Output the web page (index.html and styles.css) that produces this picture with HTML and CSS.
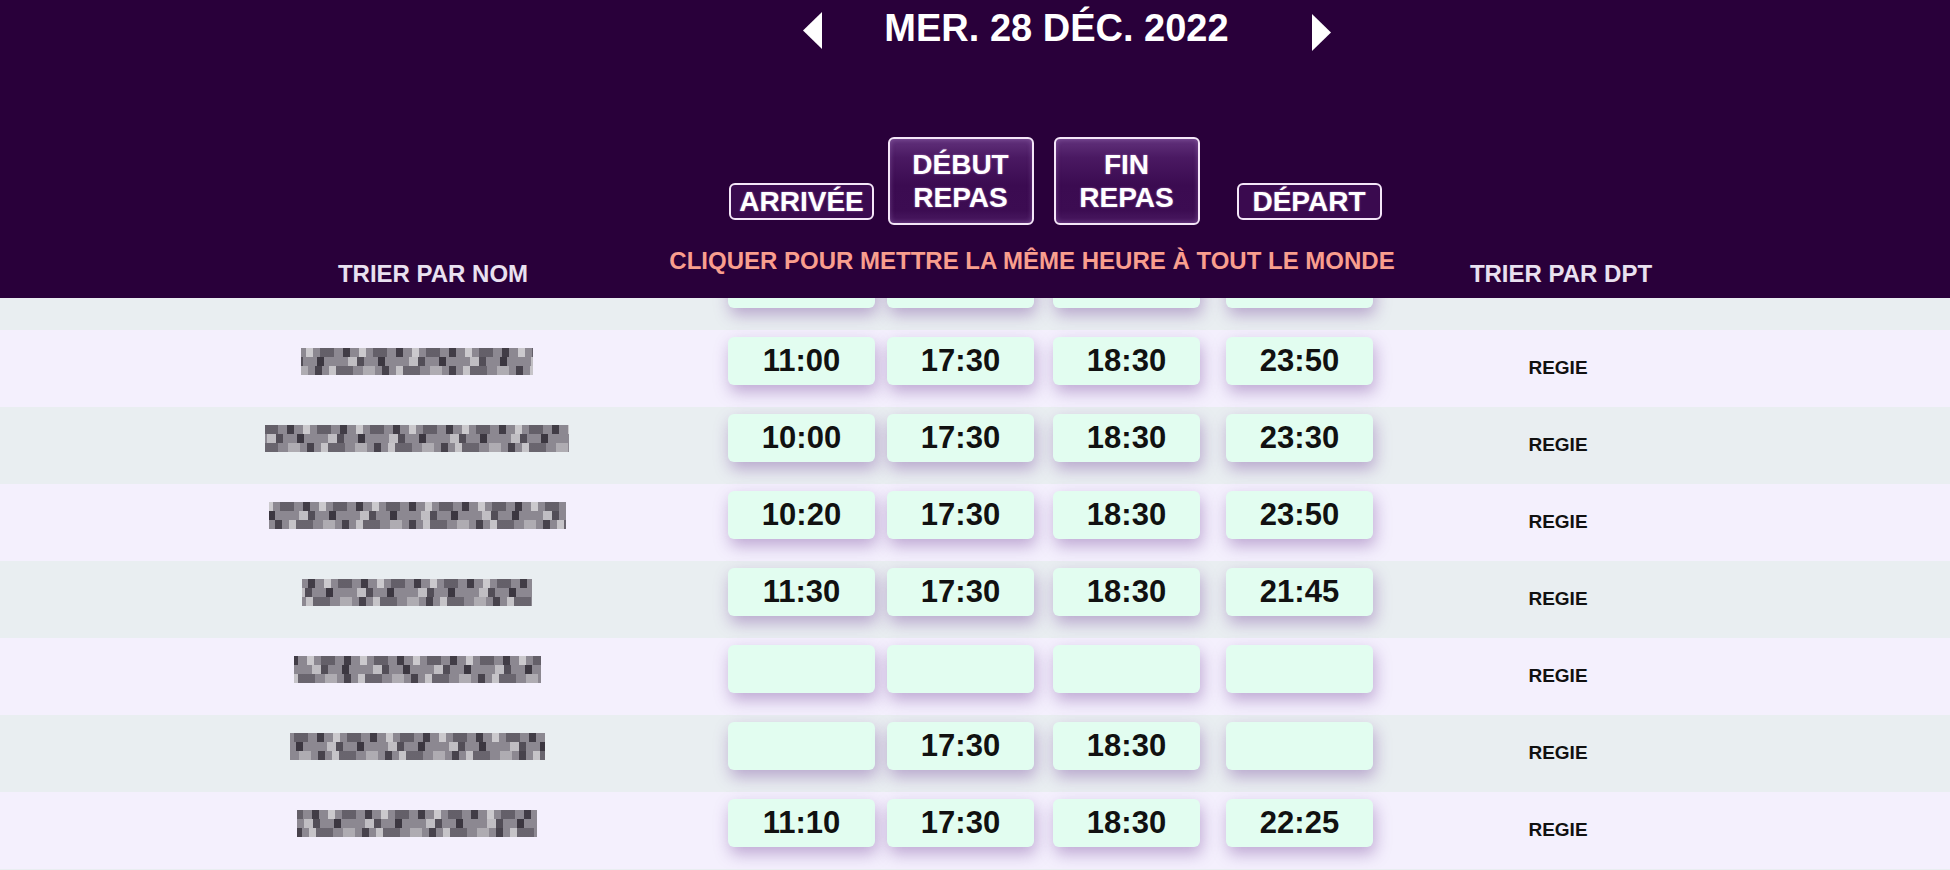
FILE: index.html
```html
<!DOCTYPE html>
<html lang="fr">
<head>
<meta charset="utf-8">
<title>Planning</title>
<link rel="stylesheet" href="styles.css">
</head>
<body>
<header class="top">
  <div class="nav">
    <svg class="arrow arrow-left" width="19" height="37" viewBox="0 0 19 37"><polygon points="19,0 19,37 0,18.5" fill="#fff"/></svg>
    <h1 class="date">MER. 28 DÉC. 2022</h1>
    <svg class="arrow arrow-right" width="19" height="37" viewBox="0 0 19 37"><polygon points="0,0 19,18.5 0,37" fill="#fff"/></svg>
  </div>
  <button class="btn btn-small b1">ARRIVÉE</button>
  <button class="btn btn-big b2">DÉBUT<br>REPAS</button>
  <button class="btn btn-big b3">FIN<br>REPAS</button>
  <button class="btn btn-small b4">DÉPART</button>
  <span class="sort sort-name">TRIER PAR NOM</span>
  <span class="hint">CLIQUER POUR METTRE LA MÊME HEURE À TOUT LE MONDE</span>
  <span class="sort sort-dpt">TRIER PAR DPT</span>
</header>

<main class="list">
  <div class="row">
    <div class="c-name"><div class="name n0"></div></div>
    <div class="t"></div><div class="t"></div><div class="t"></div><div class="t"></div>
    <div class="dpt"></div>
  </div>
  <div class="row">
    <div class="c-name"><div class="name n1"></div></div>
    <div class="t">11:00</div><div class="t">17:30</div><div class="t">18:30</div><div class="t">23:50</div>
    <div class="dpt">REGIE</div>
  </div>
  <div class="row">
    <div class="c-name"><div class="name n2"></div></div>
    <div class="t">10:00</div><div class="t">17:30</div><div class="t">18:30</div><div class="t">23:30</div>
    <div class="dpt">REGIE</div>
  </div>
  <div class="row">
    <div class="c-name"><div class="name n3"></div></div>
    <div class="t">10:20</div><div class="t">17:30</div><div class="t">18:30</div><div class="t">23:50</div>
    <div class="dpt">REGIE</div>
  </div>
  <div class="row">
    <div class="c-name"><div class="name n4"></div></div>
    <div class="t">11:30</div><div class="t">17:30</div><div class="t">18:30</div><div class="t">21:45</div>
    <div class="dpt">REGIE</div>
  </div>
  <div class="row">
    <div class="c-name"><div class="name n5"></div></div>
    <div class="t"></div><div class="t"></div><div class="t"></div><div class="t"></div>
    <div class="dpt">REGIE</div>
  </div>
  <div class="row">
    <div class="c-name"><div class="name n6"></div></div>
    <div class="t"></div><div class="t">17:30</div><div class="t">18:30</div><div class="t"></div>
    <div class="dpt">REGIE</div>
  </div>
  <div class="row">
    <div class="c-name"><div class="name n7"></div></div>
    <div class="t">11:10</div><div class="t">17:30</div><div class="t">18:30</div><div class="t">22:25</div>
    <div class="dpt">REGIE</div>
  </div>
</main>
</body>
</html>
```

FILE: styles.css
```css
html, body {
  margin: 0;
  padding: 0;
  overflow: hidden;
  background: #e9eef1;
  font-family: "Liberation Sans", Arial, Helvetica, sans-serif;
}

:root {
  --cols: 722px 159px 159px 173px 173px 344px 1fr;
}

/* ---------- header ---------- */
.top {
  position: sticky;
  top: 0;
  z-index: 2;
  height: 298px;
  background: #29003a;
  display: grid;
  grid-template-columns: var(--cols);
  grid-template-rows: 62px 75px 88px 1fr;
}

.nav {
  grid-column: 1 / -1;
  grid-row: 1;
  display: flex;
  justify-content: center;
  align-items: flex-start;
  padding-left: 184px;
}

.arrow { display: block; }
.arrow-left { margin-top: 12px; }
.arrow-right { margin-top: 14px; }

.date {
  margin: 9px 83px 0 62px;
  font-size: 38px;
  line-height: 38px;
  font-weight: bold;
  color: #fff;
  white-space: nowrap;
}

.btn {
  grid-row: 3;
  justify-self: center;
  box-sizing: border-box;
  padding: 0;
  font-family: inherit;
  font-weight: bold;
  font-size: 28px;
  line-height: 33px;
  color: #fff;
  text-shadow: 0 0 2px rgba(240, 190, 255, 0.55);
  border: 2px solid #f4e6f8;
  border-radius: 6px;
  background: #3a0a4f;
  cursor: pointer;
}

.btn-small {
  width: 145px;
  height: 37px;
  align-self: end;
  margin-bottom: 5px;
}

.btn-big {
  width: 146px;
  height: 88px;
  background: linear-gradient(180deg, #62327c 0%, #4a1962 22%, #3b0b51 55%, #3c0c52 85%, #4a1a62 100%);
  box-shadow: inset 0 0 5px rgba(200, 160, 225, 0.35);
}

.b1 { grid-column: 2; }
.b2 { grid-column: 3; }
.b3 { grid-column: 4; }
.b4 { grid-column: 5; margin-left: 19px; }

.sort {
  grid-row: 4;
  align-self: start;
  margin-top: 35px;
  font-size: 24px;
  font-weight: bold;
  color: #e9e1f0;
  white-space: nowrap;
  justify-self: center;
}

.sort-name { grid-column: 1; padding-left: 144px; }
.sort-dpt { grid-column: 6; margin-left: 6px; }

.hint {
  grid-row: 4;
  grid-column: 2 / 6;
  justify-self: center;
  align-self: start;
  margin-top: 22px;
  margin-right: 44px;
  font-size: 24px;
  font-weight: bold;
  color: #f99e8e;
  white-space: nowrap;
}

/* ---------- list ---------- */
.list {
  margin-top: -45.5px;
  position: relative;
  z-index: 1;
}

.row {
  display: grid;
  grid-template-columns: var(--cols);
  height: 77px;
  align-items: start;
}

.row:nth-child(odd) { background: #e9eef1; }
.row:nth-child(even) { background: #f4f0fd; }

.c-name {
  padding-left: 112px;
  padding-top: 18px;
  display: flex;
  justify-content: center;
}

.t {
  justify-self: center;
  width: 147px;
  height: 48px;
  margin-top: 7px;
  background: #e2fdf0;
  border-radius: 6px;
  box-shadow: 2px 7px 16px rgba(110, 60, 150, 0.4);
  display: flex;
  align-items: center;
  justify-content: center;
  font-size: 31px;
  font-weight: bold;
  color: #111;
}

.dpt {
  align-self: center;
  justify-self: center;
  font-size: 19px;
  font-weight: bold;
  color: #111;
}

/* pixelated (anonymised) names */
.name {
  height: 27px;
  background-color: #8c8891;
  background-image:
    repeating-linear-gradient(90deg, rgba(25,20,30,.65) 0 7px, transparent 7px 16px, rgba(255,255,255,.55) 16px 23px, transparent 23px 30px, rgba(25,20,30,.35) 30px 44px, transparent 44px 53px),
    repeating-linear-gradient(90deg, transparent 0 9px, rgba(255,255,255,.45) 9px 18px, rgba(25,20,30,.5) 18px 25px, transparent 25px 39px, rgba(25,20,30,.7) 39px 46px, transparent 46px 61px),
    repeating-linear-gradient(90deg, rgba(255,255,255,.3) 0 12px, transparent 12px 19px, rgba(25,20,30,.6) 19px 26px, transparent 26px 33px, rgba(255,255,255,.5) 33px 40px, rgba(25,20,30,.3) 40px 57px, transparent 57px 67px);
  background-size: calc(100% + 70px) 9px;
  background-repeat: no-repeat;
  background-position: 0 0, 0 9px, 0 18px;
}

.n0 { width: 240px; }
.n1 { width: 232px; background-position: -11px 0, -23px 9px, -5px 18px; }
.n2 { width: 304px; background-position: -31px 0, -7px 9px, -44px 18px; }
.n3 { width: 297px; background-position: -19px 0, -40px 9px, -13px 18px; }
.n4 { width: 230px; background-position: -47px 0, -15px 9px, -29px 18px; }
.n5 { width: 247px; background-position: -3px 0, -52px 9px, -36px 18px; }
.n6 { width: 255px; background-position: -26px 0, -33px 9px, -58px 18px; }
.n7 { width: 240px; background-position: -38px 0, -2px 9px, -21px 18px; }
```
